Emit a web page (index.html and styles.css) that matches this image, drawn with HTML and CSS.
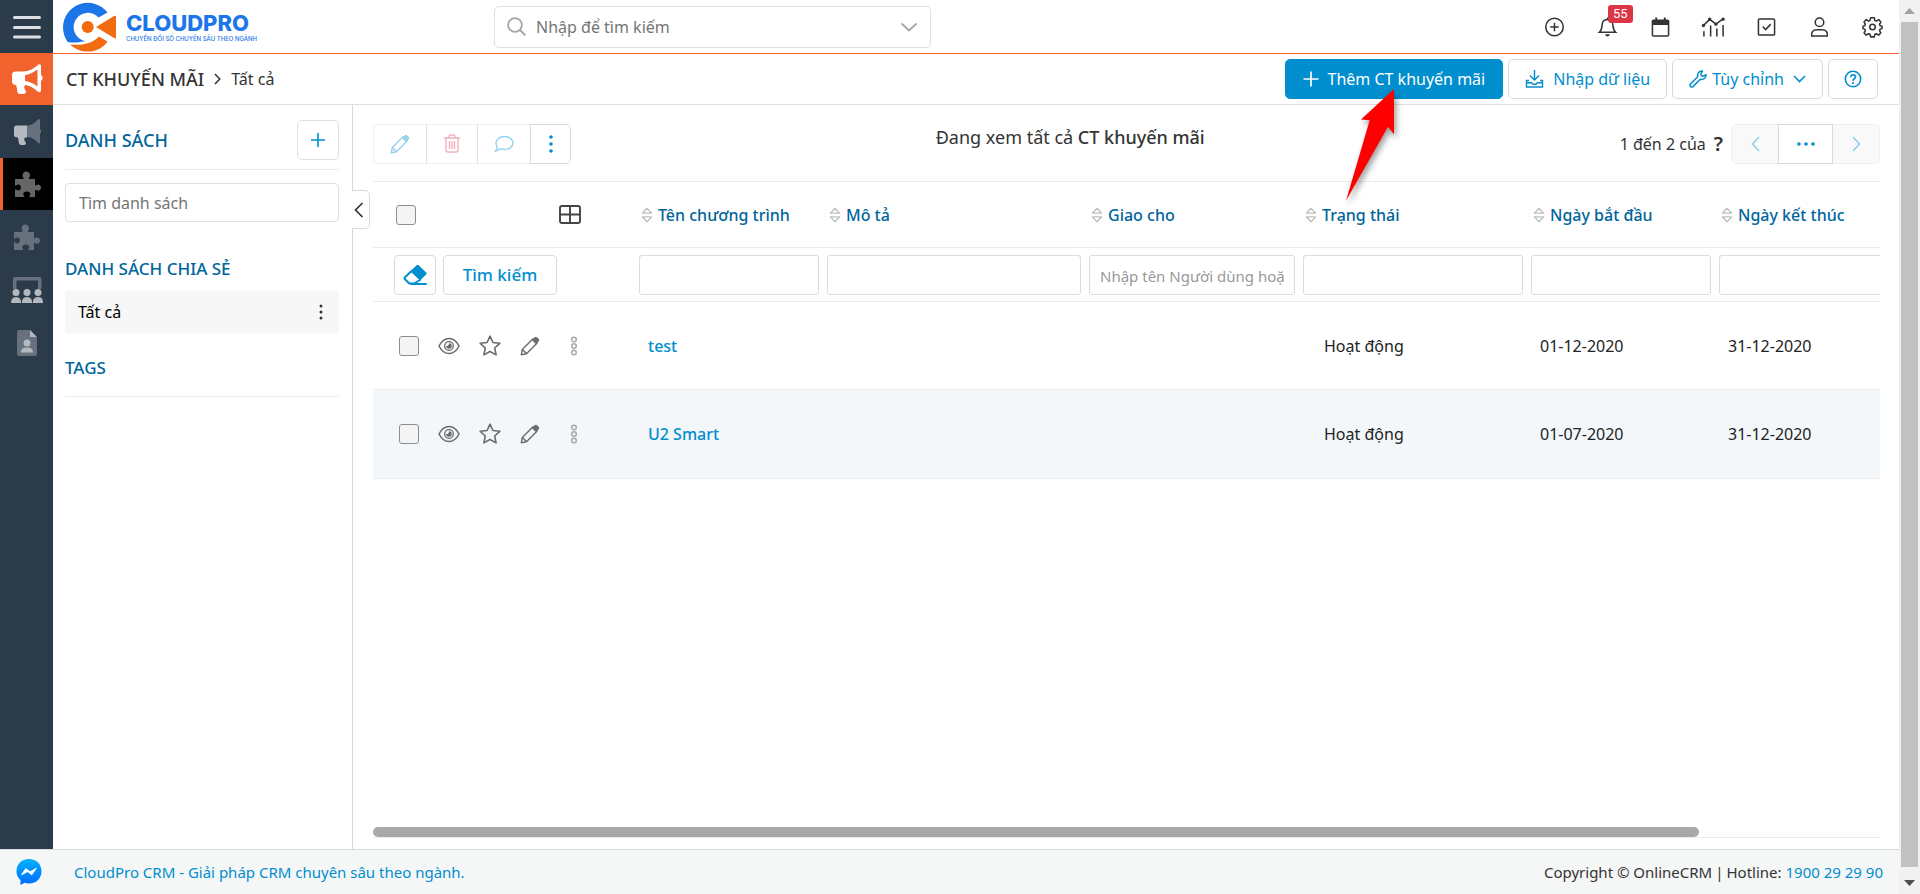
FILE: index.html
```html
<!DOCTYPE html>
<html lang="vi">
<head>
<meta charset="utf-8">
<title>CT Khuyến mãi - CloudPro CRM</title>
<link rel="stylesheet" href="styles.css">
</head>
<body>
<svg class="defs" aria-hidden="true">
  <symbol id="sort" viewBox="0 0 12 16"><path d="M6 1.2 10.6 6.2H1.4ZM1.4 9.8h9.2L6 14.8Z" fill="none" stroke="#bfbfbf" stroke-width="1.3" stroke-linejoin="round"/></symbol>
  <symbol id="eye" viewBox="0 0 22 18"><path d="M1 9C3.500 4 7 1.500 11 1.500S18.500 4 21 9C18.500 14 15 16.500 11 16.500S3.500 14 1 9Z" fill="none" stroke="currentColor" stroke-width="1.500"/><circle cx="11" cy="9" r="4.300" fill="none" stroke="currentColor" stroke-width="1.300"/><path d="M11 6.200a2.800 2.800 0 1 1-2.800 2.800A2.800 2.800 0 0 0 11 6.200Z" fill="currentColor"/></symbol>
  <symbol id="star" viewBox="0 0 22 22"><path d="m11 1.200 2.900 6.300 6.900.8-5.100 4.700 1.400 6.900L11 16.500l-6.100 3.400 1.400-6.900L1.200 8.300l6.900-.8Z" fill="none" stroke="currentColor" stroke-width="1.600" stroke-linejoin="round"/></symbol>
  <symbol id="pencil" viewBox="0 0 20 20"><path d="M1.300 18.700 2.300 13.500 13 2.800 17.200 7 6.500 17.700ZM2.400 13.600l4 4" fill="none" stroke="currentColor" stroke-width="1.400" stroke-linejoin="round"/><path d="m11.800 4 2.600-2.500c1-1 2-.9 2.800-.1l1.400 1.400c.8.800.9 1.800-.1 2.800L16 8.200Z" fill="currentColor"/></symbol>
  <symbol id="rings" viewBox="0 0 8 20"><g fill="none" stroke="#a9a9a9" stroke-width="1.500"><circle cx="4" cy="3.500" r="2.300"/><circle cx="4" cy="10" r="2.300"/><circle cx="4" cy="16.500" r="2.300"/></g></symbol>
  <symbol id="puzzle" viewBox="0 0 26 26"><path d="M0 8h8.500c.6-1-.9-1.600-.9-3.800C7.600 2 9.300.5 11.300.5S15 2 15 4.200C15 6.400 13.500 7 14.100 8H20v6.300c1 .5 1.500-.9 3-.9 1.700 0 3 1.400 3 3.100s-1.300 3.200-3 3.200c-1.500 0-2-1.400-3-.9V26h-5.600c-.7-1 1-1.600 1-3.100 0-1.500-1.700-2.500-3.600-2.500s-3.600 1-3.600 2.500c0 1.500 1.500 2.100.9 3.100H0v-7.600c.9-.6 1.700 1 3.300 1 1.500 0 2.600-1.300 2.600-2.900s-1.100-2.900-2.600-2.900c-1.600 0-2.400 1.600-3.300 1Z" fill="currentColor"/></symbol>
</svg>

<div class="app">
  <nav class="rail" aria-label="Menu chính">
    <button class="rail-item" aria-label="Menu"><svg width="28" height="24" viewBox="0 0 28 24"><path d="M1.500 2.500h25M1.500 12.500h25M1.500 22h25" stroke="#dcdfe3" stroke-width="3" stroke-linecap="round"/></svg></button>
    <button class="rail-item rail-brand" aria-label="Marketing"><svg width="32" height="32" viewBox="0 0 32 32"><path d="M1 12q0-3.500 3.500-3.500H12C18 8.500 23 5.500 27.500 1.500q1.500-1 2.500.8V12q1.500.5 1.500 3T30 18v10q-1 2-3 .8C23 25 19 22.500 14 22c-1.500 2-.5 3.500 1 6.500 0 2-1.500 2.500-3.500 2.500H8.500Q6 31 6 25.500L5 22Q1 22 1 18Z" fill="#fff"/><path d="M14 12.200C19 11.500 23 9 26.500 6.500v17C23 20.500 19 18.800 14 18Z" fill="#f1622c"/></svg></button>
    <button class="rail-item" aria-label="Chiến dịch"><svg width="28" height="28" viewBox="0 0 28 28"><path d="M14 8q7-1.500 11-6.500 1-1 2 0v9.500q1.300 1 1.300 2.500T27 16v9q-1 1-2 0-4-5.500-11-6Z" fill="#66717d"/><path d="M1 10q0-2.500 2.500-2.500H14v12h-2c-1.500 2-.5 3 1 5.500 0 1.500-1 2-3 2H8q-2 0-2.500-4L5 19.500Q1 19.500 1 17Z" fill="#b3b9bf"/></svg></button>
    <button class="rail-item rail-active" aria-label="CT khuyến mãi"><svg width="26" height="26"><use href="#puzzle"/></svg></button>
    <button class="rail-item rail-dim" aria-label="Voucher"><svg width="26" height="26"><use href="#puzzle"/></svg></button>
    <button class="rail-item" aria-label="Sự kiện"><svg width="32" height="26" viewBox="0 0 32 26"><path d="M2 12V2q0-2 2-2h24.500q2 0 2 2v10H27V3.500H5.500V12Z" fill="#66717d"/><g fill="#b3b9bf"><circle cx="5" cy="15.500" r="3.500"/><circle cx="16" cy="15.500" r="3.500"/><circle cx="27" cy="15.500" r="3.500"/><path d="M0 26q0-6 5-6t5.200 6ZM10.800 26q0-6 5.200-6t5.200 6ZM21.800 26q0-6 5.200-6t5 6Z"/></g></svg></button>
    <button class="rail-item" aria-label="Biểu mẫu"><svg width="20" height="26" viewBox="0 0 20 26"><path d="M0 2q0-2 2-2h11v7h7v17q0 2-2 2H2q-2 0-2-2Z" fill="#66717d"/><path d="m13 0 7 7h-7Z" fill="#b3b9bf"/><circle cx="10" cy="13" r="3.500" fill="#b3b9bf"/><path d="M4 22.500q0-5 6-5t6 5Z" fill="#b3b9bf"/></svg></button>
  </nav>

  <header class="topbar">
    <a class="logo" href="#" aria-label="CloudPro">
      <svg width="54" height="52" viewBox="0 0 54 52"><path d="M44.500 11.500A24.800 24.800 0 0 0 0 26Q0 34 4.500 41 11 42 17 41 20 40.500 22.500 40.200A14.300 14.300 0 1 1 35.500 16.500Z" fill="#1d76e8"/><path d="M7 43.500C18 44.500 28 43.500 36 35.500L44.500 40.500C37 51.500 20 55 7 43.500Z" fill="#f26b0f"/><circle cx="24.700" cy="26" r="6" fill="#f26b0f"/><path d="m33 26 18.500-11.200q1.500-.6 1.500 1V36.500q0 1.500-1.500.8Z" fill="#f26b0f"/></svg>
      <span class="logo-text"><strong>CLOUDPRO</strong><small>CHUYỂN ĐỔI SỐ CHUYÊN SÂU THEO NGÀNH</small></span>
    </a>
    <form class="search" role="search">
      <svg width="20" height="20" viewBox="0 0 20 20"><circle cx="8" cy="8" r="6.900" fill="none" stroke="#a6a6a6" stroke-width="1.800"/><path d="m13 13 5.500 5.500" stroke="#a6a6a6" stroke-width="1.800"/></svg>
      <input type="text" aria-label="Nhập để tìm kiếm" placeholder="Nhập để tìm kiếm">
      <svg width="18" height="10" viewBox="0 0 18 10"><path d="m1.500 1.500 7.500 7 7.500-7" fill="none" stroke="#a6a6a6" stroke-width="1.900"/></svg>
    </form>
    <div class="tools">
      <button aria-label="Thêm nhanh"><svg viewBox="0 0 20 20"><circle cx="10" cy="10" r="9.200"/><path d="M10 5.500v9M5.500 10h9"/></svg></button>
      <button aria-label="Thông báo"><svg viewBox="0 0 20 20"><path d="M1.500 15.500C4.500 13 4 9 4.500 6.500 5 3.500 7 2 10 2s5 1.500 5.500 4.500C16 9 15.500 13 18.500 15.500ZM10 2V0"/><path d="M7.500 17.500h5q-.5 2.500-2.500 2.500t-2.500-2.500Z" fill="#333" stroke="none"/></svg><span class="badge">55</span></button>
      <button aria-label="Lịch"><svg viewBox="0 0 20 20"><rect x="1.500" y="3" width="17" height="16.500" rx="1"/><path d="M1 2.500h18V8H1ZM4.500 0h2v3h-2ZM13.500 0h2v3h-2Z" fill="#333" stroke="none"/></svg></button>
      <button aria-label="Báo cáo"><svg class="wide" viewBox="0 0 24 20"><path d="M1 9 8 2l6.500 5L22 1.500M2 14.500V20M9 8.500V20M15.500 11.500V20M22 8V20"/><circle cx="1.500" cy="8.500" r="1"/><circle cx="8" cy="2" r="1" /><circle cx="14.500" cy="7" r="1"/><circle cx="22" cy="1.800" r="1"/></svg></button>
      <button aria-label="Công việc"><svg viewBox="0 0 20 20"><rect x="1.500" y="1.500" width="17" height="17" rx="1"/><path d="m6 9.500 3 3.200L14.500 7"/></svg></button>
      <button aria-label="Tài khoản"><svg viewBox="0 0 20 20"><circle cx="10" cy="5" r="4.500"/><path d="M1.800 19.500q-1-6.500 5.500-6.500h5.400q6.500 0 5.500 6.500Z"/></svg></button>
      <button aria-label="Cài đặt"><svg viewBox="0 0 20 20"><circle cx="10" cy="10" r="2.900"/><path d="M8 .3h4l.4 2.700 1.700.8 2.400-1.600 2.300 2.600-1.400 2.300.6 1.500 2 .5v2.600l-2 .6-.6 1.500 1.400 2.300-2.300 2.500-2.400-1.500-1.700.8-.4 2.500H8l-.5-2.500-1.700-.8-2.400 1.500-2.300-2.500 1.400-2.300-.6-1.500-1.900-.6V9.100l1.900-.5.6-1.500-1.400-2.300 2.300-2.600 2.400 1.600L7.500 3Z" stroke-linejoin="round"/></svg></button>
    </div>
  </header>

  <div class="crumbs">
    <h1>CT KHUYẾN MÃI</h1>
    <svg width="7" height="12" viewBox="0 0 7 12"><path d="m1 1 4.800 5L1 11" fill="none" stroke="#333" stroke-width="1.500"/></svg>
    <span class="crumb-view">Tất cả</span>
    <div class="actions">
      <div class="callout">
        <button class="btn btn-primary"><svg width="16" height="16" viewBox="0 0 16 16"><path d="M8 .5v15M.5 8h15" stroke="#fff" stroke-width="1.700"/></svg>Thêm CT khuyến mãi</button>
        <svg class="arrow" viewBox="0 0 60 125" aria-hidden="true"><path d="M53 4 20 34.500l8.700.7L5 115.700l42-74 6 7.500Z" fill="#f00"/></svg>
      </div>
      <button class="btn"><svg width="19" height="18" viewBox="0 0 19 18"><path d="M9.500 0v10M5 5.500l4.500 4.500L14 5.500M4 10.500H1.500V17h16v-6.500H15M1.500 12.800h5l1.500 1.500h3l1.500-1.500h5" fill="none" stroke="#008ecf" stroke-width="1.400"/></svg>Nhập dữ liệu</button>
      <button class="btn btn-menu"><svg width="18" height="18" viewBox="0 0 18 18"><path d="m1.500 14 7.200-7.200C8 3.500 10 .8 13.500 1L11.800 3.600l.5 2.200 2.200.4L17 4.500c.3 3.500-2.500 5.500-5.700 4.800L4 16.600c-1.800 1.400-3.800-.9-2.500-2.600Z" fill="none" stroke="#008ecf" stroke-width="1.500" stroke-linejoin="round"/></svg>Tùy chỉnh<svg class="caret" width="13" height="8" viewBox="0 0 13 8"><path d="m1 1 5.500 5.500L12 1" fill="none" stroke="#008ecf" stroke-width="1.600"/></svg></button>
      <button class="btn btn-help" aria-label="Trợ giúp"><svg width="18" height="18" viewBox="0 0 18 18"><circle cx="9" cy="9" r="7.700" fill="none" stroke="#008ecf" stroke-width="1.600"/><path d="M6.700 7.200C6.700 4 11.500 4.300 11.500 7 11.500 8.800 9 8.700 9 10.700" fill="none" stroke="#008ecf" stroke-width="1.600"/><circle cx="9" cy="13" r="1.100" fill="#008ecf"/></svg></button>
    </div>
  </div>

  <aside class="lists">
    <div class="lists-head">
      <h2>DANH SÁCH</h2>
      <button class="add" aria-label="Thêm danh sách"><svg width="16" height="16" viewBox="0 0 16 16"><path d="M8 1v14M1 8h14" stroke="#008ecf" stroke-width="1.600"/></svg></button>
    </div>
    <input class="list-search" type="text" aria-label="Tìm danh sách" placeholder="Tìm danh sách">
    <h3>DANH SÁCH CHIA SẺ</h3>
    <div class="list-item"><a href="#">Tất cả</a><button aria-label="Tùy chọn"><svg width="4" height="16" viewBox="0 0 4 16"><g fill="#333"><circle cx="2" cy="2" r="1.500"/><circle cx="2" cy="8" r="1.500"/><circle cx="2" cy="14" r="1.500"/></g></svg></button></div>
    <h3 class="tags">TAGS</h3>
    <button class="collapse" aria-label="Thu gọn"><svg width="10" height="16" viewBox="0 0 10 16"><path d="M8.500 1 1.500 8l7 7" fill="none" stroke="#333" stroke-width="1.700"/></svg></button>
  </aside>

  <main class="content">
    <div class="bar">
      <div class="group">
        <button disabled class="g-edit" aria-label="Sửa"><svg width="20" height="20"><use href="#pencil"/></svg></button>
        <button disabled class="g-del" aria-label="Xóa"><svg width="16" height="19" viewBox="0 0 16 19"><path d="M0 4h16M5 4V2.500Q5 1 6.500 1h3Q11 1 11 2.500V4M2 4v12q0 2 2 2h8q2 0 2-2V4M5.500 7v8M8 7v8M10.500 7v8" fill="none" stroke="currentColor" stroke-width="1.400"/></svg></button>
        <button disabled class="g-chat" aria-label="Bình luận"><svg width="20" height="18" viewBox="0 0 20 18"><path d="M10.500 1.500c4.800 0 8.500 2.900 8.500 6.500s-3.700 6.500-8.500 6.500c-1.500 0-3-.3-4.200-.9C4.800 15.200 3 16 1.300 16 2.400 15 3 13.500 3.200 11.800 2.400 10.700 2 9.400 2 8c0-3.600 3.700-6.500 8.500-6.500Z" fill="none" stroke="currentColor" stroke-width="1.400"/></svg></button>
        <button class="g-more" aria-label="Thêm thao tác"><svg width="4" height="18" viewBox="0 0 4 18"><g fill="#008ecf"><circle cx="2" cy="2" r="1.800"/><circle cx="2" cy="9" r="1.800"/><circle cx="2" cy="16" r="1.800"/></g></svg></button>
      </div>
      <p class="viewing">Đang xem tất cả <strong>CT khuyến mãi</strong></p>
      <div class="pager">
        <span>1 đến 2 của</span><b>?</b>
        <div class="group">
          <button disabled class="p-nav" aria-label="Trang trước"><svg width="9" height="16" viewBox="0 0 9 16"><path d="M8 1 1.500 8 8 15" fill="none" stroke="#8fcdeb" stroke-width="1.500"/></svg></button>
          <button class="p-more" aria-label="Chọn trang"><svg width="18" height="4" viewBox="0 0 18 4"><g fill="#008ecf"><circle cx="2" cy="2" r="1.800"/><circle cx="9" cy="2" r="1.800"/><circle cx="16" cy="2" r="1.800"/></g></svg></button>
          <button disabled class="p-nav" aria-label="Trang sau"><svg width="9" height="16" viewBox="0 0 9 16"><path d="M1 1l6.500 7L1 15" fill="none" stroke="#8fcdeb" stroke-width="1.500"/></svg></button>
        </div>
      </div>
    </div>

    <div class="table-wrap">
      <table>
        <colgroup><col class="c-tools"><col class="c-name"><col class="c-desc"><col class="c-owner"><col class="c-status"><col class="c-date"><col></colgroup>
        <thead>
          <tr class="heads">
            <th><div class="head-tools"><input type="checkbox" aria-label="Chọn tất cả"><button aria-label="Chọn cột"><svg width="22" height="19" viewBox="0 0 22 19"><path d="M3 1h16q2 0 2 2v13q0 2-2 2H3q-2 0-2-2V3q0-2 2-2ZM1 9.500h20M11 1v17" fill="none" stroke="#444" stroke-width="1.900"/></svg></button></div></th>
            <th><span class="head"><svg width="12" height="16"><use href="#sort"/></svg>Tên chương trình</span></th>
            <th><span class="head"><svg width="12" height="16"><use href="#sort"/></svg>Mô tả</span></th>
            <th><span class="head"><svg width="12" height="16"><use href="#sort"/></svg>Giao cho</span></th>
            <th><span class="head"><svg width="12" height="16"><use href="#sort"/></svg>Trạng thái</span></th>
            <th><span class="head"><svg width="12" height="16"><use href="#sort"/></svg>Ngày bắt đầu</span></th>
            <th><span class="head"><svg width="12" height="16"><use href="#sort"/></svg>Ngày kết thúc</span></th>
          </tr>
          <tr class="filters">
            <td><div class="filter-tools"><button class="erase" aria-label="Xóa bộ lọc"><svg width="24" height="20" viewBox="0 0 24 20"><path d="M14 0q.7-.4 1.400 0l8 7.700q.8.8 0 1.600L17 15.500 7.300 6.300Z" fill="#008ecf"/><path d="M8 6.500 2 12.200q-1 1 0 2L6.300 18.500H11L17 15M8 18.900h15" fill="none" stroke="#008ecf" stroke-width="2" stroke-linecap="round"/></svg></button><button class="find">Tìm kiếm</button></div></td>
            <td><input type="text" aria-label="Lọc tên chương trình"></td>
            <td><input type="text" aria-label="Lọc mô tả"></td>
            <td><input type="text" aria-label="Lọc giao cho" placeholder="Nhập tên Người dùng hoặc nhóm"></td>
            <td><input type="text" aria-label="Lọc trạng thái"></td>
            <td><input type="text" aria-label="Lọc ngày bắt đầu"></td>
            <td><input type="text" aria-label="Lọc ngày kết thúc"></td>
          </tr>
        </thead>
        <tbody>
          <tr>
            <td><div class="row-tools"><input type="checkbox" aria-label="Chọn test"><button aria-label="Xem"><svg width="22" height="18"><use href="#eye"/></svg></button><button aria-label="Đánh dấu"><svg width="22" height="22"><use href="#star"/></svg></button><button aria-label="Sửa"><svg width="20" height="20"><use href="#pencil"/></svg></button><button class="more" aria-label="Khác"><svg width="8" height="20"><use href="#rings"/></svg></button></div></td>
            <td><a href="#">test</a></td><td></td><td></td><td class="status">Hoạt động</td><td>01-12-2020</td><td>31-12-2020</td>
          </tr>
          <tr class="alt">
            <td><div class="row-tools"><input type="checkbox" aria-label="Chọn U2 Smart"><button aria-label="Xem"><svg width="22" height="18"><use href="#eye"/></svg></button><button aria-label="Đánh dấu"><svg width="22" height="22"><use href="#star"/></svg></button><button aria-label="Sửa"><svg width="20" height="20"><use href="#pencil"/></svg></button><button class="more" aria-label="Khác"><svg width="8" height="20"><use href="#rings"/></svg></button></div></td>
            <td><a href="#">U2 Smart</a></td><td></td><td></td><td class="status">Hoạt động</td><td>01-07-2020</td><td>31-12-2020</td>
          </tr>
        </tbody>
      </table>
    </div>
    <div class="hscroll"><div class="hthumb"></div></div>
  </main>

  <footer class="footer">
    <svg width="26" height="26" viewBox="0 0 26 26"><defs><linearGradient id="msg" x1="0" y1="0" x2="0" y2="1"><stop offset="0" stop-color="#00b2ff"/><stop offset="1" stop-color="#006aff"/></linearGradient></defs><path d="M13 0C5.500 0 .5 5.300.5 12.300c0 3.700 1.500 6.700 4 8.900V26l4.200-2.200c1.300.5 2.800.7 4.300.7 7.500 0 12.500-5.300 12.500-12.200S20.500 0 13 0Z" fill="url(#msg)"/><path d="m5.500 15.800 4.300-6.200 4.300 3.200 6.200-3.500-4.500 6.500-4.200-3.200Z" fill="#fff" stroke="#fff" stroke-linejoin="round"/></svg>
    <a href="#">CloudPro CRM - Giải pháp CRM chuyên sâu theo ngành.</a>
    <p>Copyright © OnlineCRM<span class="sep">|</span>Hotline: <a href="#">1900 29 29 90</a></p>
  </footer>
</div>
<div class="vscroll" aria-hidden="true">
  <svg width="11" height="6" viewBox="0 0 11 6"><path d="M0 6 5.500 0 11 6Z" fill="#a3a3a3"/></svg>
  <div class="vthumb"></div>
  <svg width="11" height="6" viewBox="0 0 11 6"><path d="M0 0h11L5.500 6Z" fill="#4d4d4d"/></svg>
</div>
</body>
</html>
```
FILE: styles.css
```css
* { box-sizing: border-box; }

body {
  margin: 0;
  display: flex;
  height: 100vh;
  font-family: "Noto Sans", "Open Sans", sans-serif;
  font-size: 16px;
  color: #333;
  background: #fff;
}

h1, h2, h3, p { margin: 0; font-weight: 500; }
a { color: #008ecf; text-decoration: none; }
svg { display: block; flex: none; }
button, input { font: inherit; color: inherit; }
button {
  display: flex;
  align-items: center;
  justify-content: center;
  padding: 0;
  border: 0;
  background: none;
}
.defs { position: absolute; width: 0; height: 0; }

.app {
  flex: 1;
  min-width: 0;
  display: grid;
  grid-template-columns: 53px 300px minmax(0, 1fr);
  grid-template-rows: 54px 51px minmax(0, 1fr) 45px;
}

/* Module rail */
.rail { grid-row: 1 / 4; background: #2c3b49; }
.rail-item { width: 100%; height: 53px; }
.rail-brand { height: 52px; background: #f1622c; }
.rail-active { background: #000; color: #666; border-left: 3px solid #f1622c; height: 52px; }
.rail-dim { color: #66717d; }

/* Top bar */
.topbar {
  grid-column: 2 / 4;
  display: grid;
  grid-template-columns: 441px 437px 1fr;
  align-items: center;
  border-bottom: 1px solid #f1622c;
}
.logo { display: flex; gap: 9px; padding-left: 10px; color: #1d76e8; }
.logo-text { display: flex; flex-direction: column; justify-content: center; font-family: Inter, sans-serif; }
.logo-text strong { font-size: 22px; font-weight: 800; line-height: 24px; }
.logo-text small { font-size: 6px; font-weight: 500; line-height: 8px; white-space: nowrap; }
.search {
  display: flex;
  align-items: center;
  gap: 8px;
  height: 42px;
  padding: 0 12px;
  border: 1px solid #dfdfdf;
  border-radius: 5px;
}
.search input { flex: 1; min-width: 0; border: 0; outline: 0; background: none; padding: 0 1px; }
::placeholder { color: #757575; opacity: 1; }
.tools { display: flex; justify-content: flex-end; }
.tools button { position: relative; width: 53px; height: 42px; }
.tools svg { width: 19px; height: 20px; fill: none; stroke: #333; stroke-width: 1.6; overflow: visible; }
.tools svg.wide { width: 23px; }
.badge {
  position: absolute;
  top: -1px;
  left: 27px;
  padding: 0 5px;
  border-radius: 3px;
  background: #dc3545;
  color: #fff;
  font: 13px/18px Roboto, sans-serif;
}

/* Breadcrumb bar */
.crumbs {
  grid-column: 2 / 4;
  display: flex;
  align-items: center;
  gap: 10px;
  padding: 0 21px 0 13px;
  border-bottom: 1px solid #dfdfdf;
}
.crumbs h1 { font-size: 18px; }
.crumb-view { font-size: 16px; }
.actions { display: flex; gap: 5px; margin-left: auto; }
.btn {
  gap: 9px;
  height: 40px;
  padding: 0 16px;
  border: 1px solid #dadada;
  border-radius: 5px;
  color: #008ecf;
  background: #fff;
  white-space: nowrap;
}
.btn-primary { padding: 0 17px; background: #008ecf; border-color: #008ecf; color: #fff; }
.btn-menu { gap: 5px; }
.btn-menu .caret { margin-left: 4px; }
.btn-help { width: 50px; }
.callout { position: relative; }
.arrow {
  position: absolute;
  top: 26px;
  left: 56px;
  width: 60px;
  height: 125px;
  overflow: visible;
  z-index: 2;
  filter: drop-shadow(2px 4px 3px rgba(0, 0, 0, .4));
}

/* List panel */
.lists {
  position: relative;
  padding: 15px 13px 0 12px;
  border-right: 1px solid #d9d9d9;
}
.lists-head {
  display: flex;
  align-items: center;
  justify-content: space-between;
  padding-bottom: 9px;
  border-bottom: 1px solid #ebebeb;
}
.lists h2, .lists h3 { color: #00659b; }
.lists h2 { font-size: 18px; }
.lists h3 { font-size: 17px; line-height: 24px; margin-top: 35px; }
.add { width: 42px; height: 40px; border: 1px solid #dfdfdf; border-radius: 5px; }
.list-search {
  display: block;
  width: 100%;
  height: 39px;
  margin-top: 13px;
  padding: 0 13px;
  border: 1px solid #dfdfdf;
  border-radius: 4px;
}
.list-item {
  display: flex;
  align-items: center;
  justify-content: space-between;
  height: 42px;
  margin-top: 10px;
  padding: 0 12px 0 13px;
  background: #f7f7f7;
}
.list-item a { color: #000; }
.list-item button { width: 12px; height: 24px; }
.lists .tags { margin-top: 23px; padding-bottom: 16px; border-bottom: 1px solid #ebebeb; }
.collapse {
  position: absolute;
  top: 85px;
  left: 100%;
  width: 18px;
  height: 39px;
  border: 1px solid #d9d9d9;
  border-left: 0;
  border-radius: 0 5px 5px 0;
  background: #fff;
}
.collapse svg { margin-right: 3px; }

/* Record list */
.content { display: flex; flex-direction: column; padding: 0 19px 11px 20px; }
.bar {
  display: grid;
  grid-template-columns: 5fr auto 6fr;
  align-items: center;
  height: 77px;
  padding-top: 1px;
  border-bottom: 1px solid #ececec;
}
.group { display: flex; }
.group button { height: 40px; border: 1px solid #dadada; background: #fff; }
.group button:disabled { border-color: #efefef; }
.group button:not(:first-child):disabled { border-left-color: #e2e2e2; }
.group button + button { margin-left: -1px; }
.group button:first-child { border-radius: 5px 0 0 5px; }
.group button:last-child { border-radius: 0 5px 5px 0; }
.g-edit, .g-chat { width: 54px; color: #99d2ec; }
.g-del { width: 52px; color: #f3b0b8; }
.g-more { width: 41px; }
.viewing { font-size: 18px; font-weight: 400; padding-bottom: 14px; }
.viewing strong { font-weight: 500; }
.pager { display: flex; align-items: center; justify-content: flex-end; gap: 8px; }
.pager b { font-size: 20px; font-weight: 600; }
.group .p-nav { width: 48px; background: #f9f9f9; }
.group .p-more { position: relative; width: 55px; border-color: #dadada; }

.table-wrap { flex: 1; overflow: hidden; }
table { width: 114%; min-width: 1718px; table-layout: fixed; border-collapse: separate; border-spacing: 0; }
.c-tools { width: 262px; }
.c-name, .c-date { width: 188px; }
.c-desc { width: 262px; }
.c-owner { width: 214px; }
.c-status { width: 228px; }
th, td { padding: 0; text-align: left; border-bottom: 1px solid #ececec; }
.heads { height: 66px; }
.heads th { font-weight: 500; color: #00659b; }
.head { display: flex; align-items: center; gap: 5px; padding-left: 6px; }
.head-tools { display: flex; justify-content: space-between; padding: 0 54px 0 23px; }
input[type="checkbox"] {
  appearance: none;
  width: 20px;
  height: 20px;
  margin: 0;
  border: 1px solid #8e8e8e;
  border-radius: 3px;
  background: #f4f4f4;
}
.filters { height: 54px; }
.filters td { padding: 0 4px; }
.filters input {
  display: block;
  width: 100%;
  height: 40px;
  padding: 2px 10px 0;
  border: 1px solid #dcdcdc;
  border-radius: 3px;
  font-size: 15px;
}
.filters ::placeholder { color: #999; }
.filter-tools { display: flex; gap: 7px; padding-left: 17px; }
.filter-tools button { height: 40px; border: 1px solid #dcdcdc; border-radius: 4px; color: #008ecf; font-weight: 500; font-size: 17px; }
.erase { width: 42px; }
.find { width: 114px; }
tbody tr { height: 88px; color: #222; }
tbody td { padding-left: 13px; }
tbody .status { padding-left: 25px; }
tbody a { font-weight: 500; }
.alt { height: 89px; background: #f3f7fa; }
.row-tools { display: flex; align-items: center; gap: 19px; padding-left: 13px; color: #6b6b6b; }
.row-tools .more { margin-left: 11px; }
.hscroll { border-bottom: 1px solid #ececec; }
.hthumb { width: 88%; height: 10px; border-radius: 5px; background: #a8a8a8; }

/* Footer */
.footer {
  grid-column: 1 / 4;
  display: flex;
  align-items: center;
  gap: 32px;
  padding: 0 16px;
  border-top: 1px solid #d9dddd;
  background: #f5f7f7;
  font-size: 15px;
}
.footer p { margin-left: auto; font-weight: 400; }
.sep { padding: 0 3px; }

/* Window scrollbar */
.vscroll {
  display: flex;
  flex-direction: column;
  align-items: center;
  gap: 8px;
  width: 21px;
  padding: 8px 2px;
  background: #f1f1f1;
}
.vthumb { flex: 1; align-self: stretch; margin-bottom: 5px; background: #c1c1c1; }
```
